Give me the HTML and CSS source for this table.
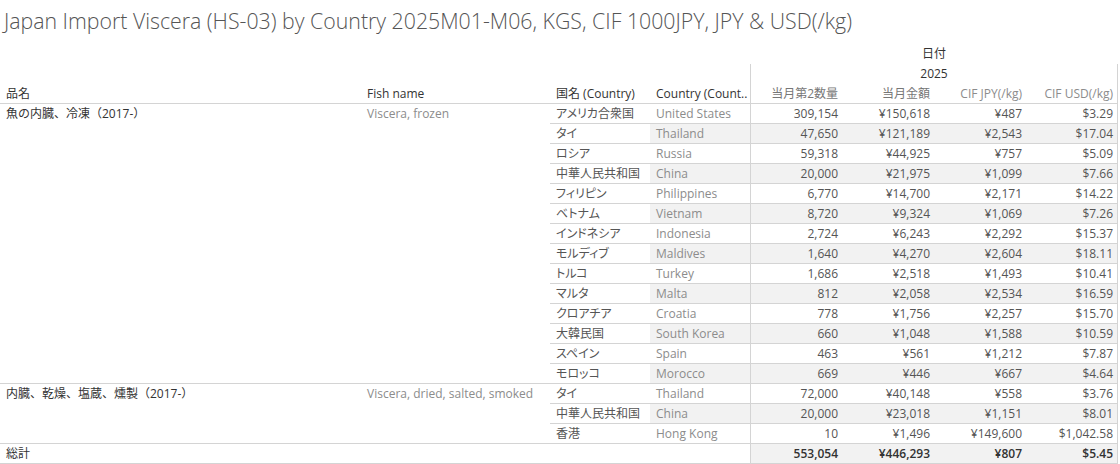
FILE: index.html
```html
<!DOCTYPE html>
<html lang="ja">
<head>
<meta charset="utf-8">
<title>Japan Import Viscera</title>
<link rel="stylesheet" href="styles.css">
</head>
<body>
<h1 class="title">Japan Import Viscera (HS-03) by Country 2025M01-M06, KGS, CIF 1000JPY, JPY &amp; USD(/kg)</h1>
<div class="pivot">
  <div class="head">
    <div class="hd-top">日付</div>
    <div class="hd-year">2025</div>
    <div class="h h-dim">品名</div>
    <div class="h h-dim">Fish name</div>
    <div class="h h-dim">国名 (Country)</div>
    <div class="h h-dim">Country (Count..</div>
    <div class="h h-num first">当月第2数量</div>
    <div class="h h-num">当月金額</div>
    <div class="h h-num light">CIF JPY(/kg)</div>
    <div class="h h-num light last">CIF USD(/kg)</div>
  </div>

  <div class="group">
    <div class="gname">魚の内臓、冷凍（2017-）</div>
    <div class="gfish">Viscera, frozen</div>
    <div class="rows">
      <div class="row"><div class="jp">アメリカ合衆国</div><div class="en">United States</div><div class="n first">309,154</div><div class="n">¥150,618</div><div class="n">¥487</div><div class="n last">$3.29</div></div>
      <div class="row band"><div class="jp">タイ</div><div class="en">Thailand</div><div class="n first">47,650</div><div class="n">¥121,189</div><div class="n">¥2,543</div><div class="n last">$17.04</div></div>
      <div class="row"><div class="jp">ロシア</div><div class="en">Russia</div><div class="n first">59,318</div><div class="n">¥44,925</div><div class="n">¥757</div><div class="n last">$5.09</div></div>
      <div class="row band"><div class="jp">中華人民共和国</div><div class="en">China</div><div class="n first">20,000</div><div class="n">¥21,975</div><div class="n">¥1,099</div><div class="n last">$7.66</div></div>
      <div class="row"><div class="jp">フィリピン</div><div class="en">Philippines</div><div class="n first">6,770</div><div class="n">¥14,700</div><div class="n">¥2,171</div><div class="n last">$14.22</div></div>
      <div class="row band"><div class="jp">ベトナム</div><div class="en">Vietnam</div><div class="n first">8,720</div><div class="n">¥9,324</div><div class="n">¥1,069</div><div class="n last">$7.26</div></div>
      <div class="row"><div class="jp">インドネシア</div><div class="en">Indonesia</div><div class="n first">2,724</div><div class="n">¥6,243</div><div class="n">¥2,292</div><div class="n last">$15.37</div></div>
      <div class="row band"><div class="jp">モルディブ</div><div class="en">Maldives</div><div class="n first">1,640</div><div class="n">¥4,270</div><div class="n">¥2,604</div><div class="n last">$18.11</div></div>
      <div class="row"><div class="jp">トルコ</div><div class="en">Turkey</div><div class="n first">1,686</div><div class="n">¥2,518</div><div class="n">¥1,493</div><div class="n last">$10.41</div></div>
      <div class="row band"><div class="jp">マルタ</div><div class="en">Malta</div><div class="n first">812</div><div class="n">¥2,058</div><div class="n">¥2,534</div><div class="n last">$16.59</div></div>
      <div class="row"><div class="jp">クロアチア</div><div class="en">Croatia</div><div class="n first">778</div><div class="n">¥1,756</div><div class="n">¥2,257</div><div class="n last">$15.70</div></div>
      <div class="row band"><div class="jp">大韓民国</div><div class="en">South Korea</div><div class="n first">660</div><div class="n">¥1,048</div><div class="n">¥1,588</div><div class="n last">$10.59</div></div>
      <div class="row"><div class="jp">スペイン</div><div class="en">Spain</div><div class="n first">463</div><div class="n">¥561</div><div class="n">¥1,212</div><div class="n last">$7.87</div></div>
      <div class="row band"><div class="jp">モロッコ</div><div class="en">Morocco</div><div class="n first">669</div><div class="n">¥446</div><div class="n">¥667</div><div class="n last">$4.64</div></div>
    </div>
  </div>

  <div class="group">
    <div class="gname">内臓、乾燥、塩蔵、燻製（2017-）</div>
    <div class="gfish">Viscera, dried, salted, smoked</div>
    <div class="rows">
      <div class="row"><div class="jp">タイ</div><div class="en">Thailand</div><div class="n first">72,000</div><div class="n">¥40,148</div><div class="n">¥558</div><div class="n last">$3.76</div></div>
      <div class="row band"><div class="jp">中華人民共和国</div><div class="en">China</div><div class="n first">20,000</div><div class="n">¥23,018</div><div class="n">¥1,151</div><div class="n last">$8.01</div></div>
      <div class="row"><div class="jp">香港</div><div class="en">Hong Kong</div><div class="n first">10</div><div class="n">¥1,496</div><div class="n">¥149,600</div><div class="n last">$1,042.58</div></div>
    </div>
  </div>

  <div class="total">
    <div class="tlabel">総計</div>
    <div class="n tot first">553,054</div><div class="n tot">¥446,293</div><div class="n tot">¥807</div><div class="n tot last">$5.45</div>
  </div>
</div>
</body>
</html>
```
FILE: styles.css
```css
html, body {
  margin: 0;
  padding: 0;
  background: #ffffff;
}
body {
  font-family: "Open Sans", "Noto Sans CJK JP", sans-serif;
  font-size: 12px;
  color: #333333;
  width: 1120px;
  height: 464px;
  overflow: hidden;
  font-feature-settings: "palt";
}
.title {
  margin: 0;
  height: 44px;
  padding: 7px 0 0 4px;
  box-sizing: border-box;
  font-size: 21.3px;
  font-weight: 300;
  line-height: 28px;
  color: #555555;
  white-space: nowrap;
}
.pivot {
  width: 1118px;
}
.pivot div {
  box-sizing: border-box;
  white-space: nowrap;
  line-height: 19px;
}
.head {
  display: grid;
  grid-template-columns: 361px 189px 100px 100px 92px 92px 92px 92px;
  grid-template-rows: 20px 20px 20px;
}
.hd-top {
  grid-column: 5 / 9;
  grid-row: 1;
  text-align: center;
  color: #333333;
}
.hd-year {
  grid-column: 5 / 9;
  grid-row: 2;
  text-align: center;
  border-left: 1px solid #d4d4d4;
  border-right: 1px solid #d4d4d4;
  color: #333333;
}
.h {
  grid-row: 3;
  border-bottom: 1px solid #d4d4d4;
  color: #333333;
  overflow: hidden;
}
.h-dim {
  padding-left: 6px;
}
.h-num {
  text-align: right;
  padding-right: 4px;
  color: #777777;
}
.h-num.light {
  color: #8c8c8c;
}
.first {
  border-left: 1px solid #d4d4d4;
}
.last {
  border-right: 1px solid #d4d4d4;
}
.group {
  display: grid;
  grid-template-columns: 361px 189px 568px;
}
.gname,
.gfish {
  padding-left: 6px;
  border-bottom: 1px solid #d4d4d4;
}
.gname {
  color: #333333;
  font-feature-settings: normal;
}
.gfish {
  color: #8c8c8c;
}
.rows {
  display: flex;
  flex-direction: column;
}
.row {
  display: grid;
  grid-template-columns: 100px 100px 92px 92px 92px 92px;
  height: 20px;
  border-bottom: 1px solid #d4d4d4;
}
.jp {
  padding-left: 6px;
  color: #555555;
}
.en {
  padding-left: 6px;
  color: #8c8c8c;
}
.n {
  text-align: right;
  padding-right: 4px;
  color: #555555;
}
.band .en,
.band .n {
  background: #f2f2f2;
}
.total {
  display: grid;
  grid-template-columns: 750px 92px 92px 92px 92px;
  height: 20px;
  border-bottom: 1px solid #d4d4d4;
}
.tlabel {
  padding-left: 6px;
  color: #333333;
}
.n.tot {
  background: #f2f2f2;
  color: #333333;
  font-weight: 600;
}
```
